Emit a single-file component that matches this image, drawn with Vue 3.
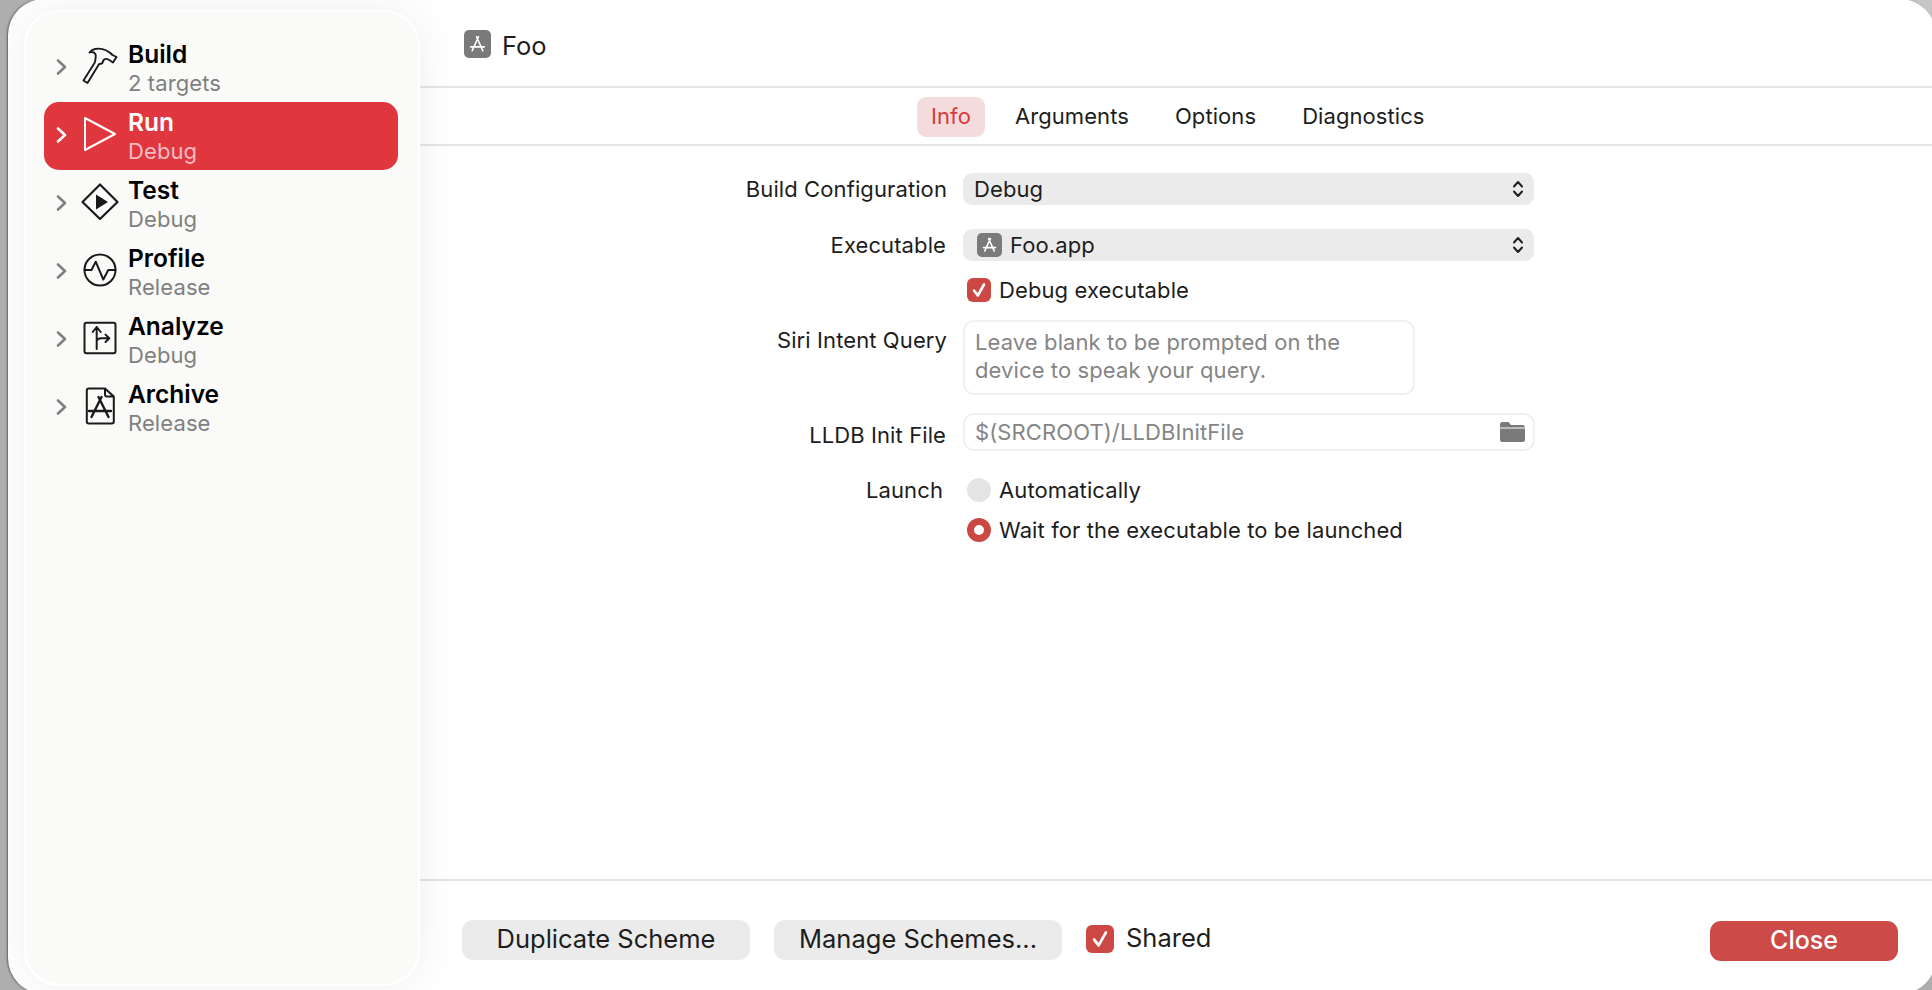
<script setup>
const rows = [
  { name: 'Build', sub: '2 targets', icon: 'build' },
  { name: 'Run', sub: 'Debug', icon: 'run', active: true },
  { name: 'Test', sub: 'Debug', icon: 'test' },
  { name: 'Profile', sub: 'Release', icon: 'profile' },
  { name: 'Analyze', sub: 'Debug', icon: 'analyze' },
  { name: 'Archive', sub: 'Release', icon: 'archive' },
]
const tabs = ['Info', 'Arguments', 'Options', 'Diagnostics']
</script>

<template>
  <div class="window">
    <aside class="sidebar">
      <div v-for="r in rows" :key="r.name" class="row" :class="{ active: r.active }">
        <svg class="chev" width="12" height="18" viewBox="0 0 12 18"><path d="M2 2.5 9 9 2 15.5" fill="none" stroke="currentColor" stroke-width="2.6" stroke-linecap="round" stroke-linejoin="round"/></svg>
        <svg class="ico" width="40" height="40" viewBox="0 0 40 40" fill="none" stroke="currentColor" stroke-width="2" stroke-linejoin="round" stroke-linecap="round">
          <template v-if="r.icon === 'build'">
            <path d="M3.5 34.5 7.5 37 18.5 19C19 17.5 21 18 22 17.5L24 13.5C25.5 12.5 27.5 13 28.5 13.5L33 16.5 36.5 11 32.5 9C28 4.5 22 1.5 15 3 12.5 3.5 10.5 5 9.5 6.5 13 5 16 7 15.8 10 15.5 12.5 15.5 15 14.5 17Z" stroke-width="1.9"/>
          </template>
          <template v-else-if="r.icon === 'run'">
            <path d="M5 4 35 20 5 36Z"/>
          </template>
          <template v-else-if="r.icon === 'test'">
            <path d="M20 2.5 37.5 20 20 37 2.5 20Z" stroke-width="2.2"/>
            <path d="M16 12.5 28 20 16 27.5Z" fill="currentColor" stroke="none"/>
          </template>
          <template v-else-if="r.icon === 'profile'">
            <circle cx="20" cy="20" r="15.5"/>
            <path d="M4.5 20H11.5L15.7 11.7 23.3 29.5 28.3 20H35.5"/>
          </template>
          <template v-else-if="r.icon === 'analyze'">
            <rect x="4.5" y="4.7" width="31" height="30.6" rx="2"/>
            <path d="M16.7 31V9M12.7 14 16.7 9 20.7 14M16.7 23C17.5 20.8 19 20.3 21 20.3H29M25.5 16.6 29.3 20.3 25.5 24"/>
          </template>
          <template v-else>
            <path d="M8.8 2.5H25L33.8 10.5V35.5A2 2 0 0 1 31.8 37.5H8.8A2 2 0 0 1 6.8 35.5V4.5A2 2 0 0 1 8.8 2.5ZM25 2.5V8.5A2 2 0 0 0 27 10.5H33.8"/>
            <path d="M18.5 11 28.5 31M21.5 11 11.5 31M9 25H31" stroke-width="2.4"/>
          </template>
        </svg>
        <div class="rowtext">
          <div class="rname">{{ r.name }}</div>
          <div class="rsub">{{ r.sub }}</div>
        </div>
      </div>
    </aside>

    <main class="main">
      <header class="head">
        <span class="appicon big">
          <svg viewBox="0 0 28 28" fill="none" stroke="#fff" stroke-width="1.7" stroke-linecap="round"><path d="M13 6.5 19.5 21M15 6.5 8.5 21M7 17H21"/></svg>
        </span>
        <span class="foo">Foo</span>
      </header>

      <nav class="tabs">
        <span v-for="(t, i) in tabs" :key="t" class="tab" :class="{ on: i === 0 }">{{ t }}</span>
      </nav>

      <section class="form">
        <div class="frow r1">
          <label class="lab">Build Configuration</label>
          <div class="select">
            <span>Debug</span>
            <svg class="updown" width="14" height="20" viewBox="0 0 14 20" fill="none" stroke="#1f1f1f" stroke-width="2" stroke-linecap="round" stroke-linejoin="round"><path d="M3 7.5 7 3 11 7.5M3 12.5 7 17 11 12.5"/></svg>
          </div>
        </div>
        <div class="frow r2">
          <label class="lab lab-ex">Executable</label>
          <div class="select">
            <span class="appicon small">
              <svg viewBox="0 0 28 28" fill="none" stroke="#fff" stroke-width="1.9" stroke-linecap="round"><path d="M13 6.5 19.5 21M15 6.5 8.5 21M7 17H21"/></svg>
            </span>
            <span>Foo.app</span>
            <svg class="updown" width="14" height="20" viewBox="0 0 14 20" fill="none" stroke="#1f1f1f" stroke-width="2" stroke-linecap="round" stroke-linejoin="round"><path d="M3 7.5 7 3 11 7.5M3 12.5 7 17 11 12.5"/></svg>
          </div>
        </div>
        <div class="frow r3">
          <span class="lab"></span>
          <div class="opt">
            <span class="check">
              <svg viewBox="0 0 24 24" fill="none" stroke="#fff" stroke-width="2.6" stroke-linecap="round" stroke-linejoin="round"><path d="M7 12.5 10.8 17.5 17 6.5"/></svg>
            </span>
            <span>Debug executable</span>
          </div>
        </div>
        <div class="frow r4">
          <label class="lab lab-siri">Siri Intent Query</label>
          <div class="area">Leave blank to be prompted on the<br>device to speak your query.</div>
        </div>
        <div class="frow r5">
          <label class="lab lab-lldb">LLDB Init File</label>
          <div class="field">
            <span>$(SRCROOT)/LLDBInitFile</span>
            <svg class="folder" width="25" height="20" viewBox="0 0 25 20"><path d="M2.5 0H8.5L11 3H22.5A2.5 2.5 0 0 1 25 5.5V17.5A2.5 2.5 0 0 1 22.5 20H2.5A2.5 2.5 0 0 1 0 17.5V2.5A2.5 2.5 0 0 1 2.5 0Z" fill="#7a7a7a"/><path d="M0 6H25" stroke="#fff" stroke-width="1"/></svg>
          </div>
        </div>
        <div class="frow r6">
          <label class="lab lab-launch">Launch</label>
          <div class="opt"><span class="radio"></span><span>Automatically</span></div>
        </div>
        <div class="frow r7">
          <span class="lab"></span>
          <div class="opt"><span class="radio sel"></span><span>Wait for the executable to be launched</span></div>
        </div>
      </section>

      <footer class="foot">
        <button class="btn b1">Duplicate Scheme</button>
        <button class="btn b2">Manage Schemes...</button>
        <span class="check big">
          <svg viewBox="0 0 24 24" fill="none" stroke="#fff" stroke-width="2.4" stroke-linecap="round" stroke-linejoin="round"><path d="M7 12.5 10.8 17.5 17 6.5"/></svg>
        </span>
        <span class="shared">Shared</span>
        <button class="close">Close</button>
      </footer>
    </main>
  </div>
</template>

<style>
html, body { margin: 0; height: 100%; overflow: hidden; background: linear-gradient(200deg, #c6c6c6 0, #aeaeae 30%); }
</style>

<style scoped>
.window {
  box-sizing: border-box;
  width: 1928px;
  height: 995px;
  margin: -1px 0 0 8px;
  background: #fff;
  border-radius: 36px;
  overflow: hidden;
  display: flex;
  box-shadow: -1px 0 2px rgba(0, 0, 0, .45);
  font-family: Inter, "Liberation Sans", sans-serif;
  color: #1d1d1d;
}
.sidebar {
  box-sizing: border-box;
  position: relative;
  z-index: 1;
  width: 396px;
  height: 976px;
  margin: 11px 0 0 16px;
  padding: 22px 20px 0 18px;
  flex: none;
  background: #fafaf8;
  border: 2px solid #fff;
  border-radius: 36px;
  box-shadow: 0 0 45px rgba(0, 0, 0, .07);
}
.row {
  height: 68px;
  border-radius: 15px;
  color: #1a1a1a;
  display: flex;
  position: relative;
}
.row.active { background: #e0373f; color: #fff; }
.chev { margin: 24px 0 0 12px; color: #808080; flex: none; }
.active .chev { color: #fff; }
.ico { margin: 12px 0 0 12px; flex: none; }
.rowtext { margin-left: 8px; padding-top: 6px; }
.rname { font-size: 24.5px; font-weight: 600; line-height: 29px; color: #000; }
.rsub { font-size: 22px; line-height: 28px; color: #808080; letter-spacing: .1px; }
.active .rname { color: #fff; }
.active .rsub { color: #f7bcc0; }

.main { flex: 1; min-width: 0; display: flex; flex-direction: column; }
.head {
  box-sizing: border-box;
  height: 89px;
  padding: 31px 0 0 44px;
  border-bottom: 2px solid #e5e5e5;
  display: flex;
  align-items: flex-start;
}
.appicon { display: inline-block; background: #7a7a7a; border-radius: 5px; flex: none; }
.appicon svg { display: block; width: 100%; height: 100%; }
.appicon.big { width: 27px; height: 28px; }
.appicon.small { width: 25px; height: 24px; margin: 0 8px 0 3px; }
.foo { margin-left: 11px; font-size: 25.5px; line-height: 31px; }
.tabs {
  box-sizing: border-box;
  height: 58px;
  padding: 9px 0 0 497px;
  border-bottom: 2px solid #e5e5e5;
  display: flex;
  gap: 18px;
  letter-spacing: .08px;
}
.tab { height: 40px; line-height: 38px; padding: 0 14px; font-size: 22px; border-radius: 9px; }
.tab:first-child { margin-right: -2px; }
.tab.on { background: #f5dcdc; color: #d8393c; }

.form { flex: 1; font-size: 22px; letter-spacing: .1px; }
.frow { display: flex; }
.lab { width: 527px; flex: none; text-align: right; margin-right: 16px; }
.lab-ex { padding-right: 1px; box-sizing: border-box; }
.lab-siri { line-height: 40px; }
.lab-lldb { line-height: 44px; height: 38px; box-sizing: border-box; padding-right: 1px; }
.lab-launch { box-sizing: border-box; padding-right: 4px; line-height: 24px; }
.r1 { margin-top: 27px; line-height: 32px; }
.r2 { margin-top: 24px; line-height: 32px; }
.r3 { margin-top: 17px; }
.r4 { margin-top: 18px; }
.r5 { margin-top: 18px; }
.r6 { margin-top: 27px; }
.r7 { margin-top: 16px; }
.select {
  box-sizing: border-box;
  width: 571px;
  height: 32px;
  background: #ebebeb;
  border-radius: 9px;
  padding: 0 11px;
  display: flex;
  align-items: center;
  position: relative;
}
.updown { position: absolute; right: 9px; top: 6px; }
.opt { margin-left: 4px; display: flex; align-items: center; height: 24px; line-height: 24px; }
.check {
  width: 24px; height: 24px; margin-right: 8px;
  background: #cb4845; border-radius: 6px; flex: none;
}
.check svg { display: block; width: 100%; height: 100%; }
.check.big { width: 28px; height: 28px; border-radius: 6px; margin: 5px 0 0 0; }
.radio { width: 24px; height: 24px; margin-right: 8px; border-radius: 50%; background: #e4e4e4; flex: none; box-sizing: border-box; }
.radio.sel { background: #fff; border: 7px solid #cb4845; }
.area {
  box-sizing: border-box;
  width: 452px;
  height: 75px;
  border: 2px solid #f1f1f1;
  border-radius: 11px;
  padding: 6px 10px;
  color: #858585;
  line-height: 28px;
}
.field {
  box-sizing: border-box;
  width: 572px;
  height: 38px;
  border: 2px solid #f1f1f1;
  border-radius: 11px;
  padding: 0 8px 0 10px;
  color: #858585;
  display: flex;
  align-items: center;
  justify-content: space-between;
}

.foot {
  box-sizing: border-box;
  height: 115px;
  border-top: 2px solid #e5e5e5;
  padding: 39px 38px 0 42px;
  display: flex;
  align-items: flex-start;
}
.btn {
  box-sizing: border-box;
  width: 288px;
  height: 40px;
  border: 0;
  border-radius: 11px;
  background: #ebebeb;
  color: #1d1d1d;
  font: 25.5px/38px Inter, "Liberation Sans", sans-serif;
  padding: 0 0 2px;
}
.b1 { margin-right: 24px; }
.b2 { margin-right: 24px; }
.shared { margin-left: 12px; font-size: 25.5px; line-height: 36px; }
.close {
  margin-left: auto;
  margin-top: 1px;
  width: 188px;
  height: 40px;
  border: 0;
  border-radius: 11px;
  background: #cc4a47;
  color: #fff;
  font: 500 25px/38px Inter, "Liberation Sans", sans-serif;
  padding: 0 0 2px;
}
</style>
